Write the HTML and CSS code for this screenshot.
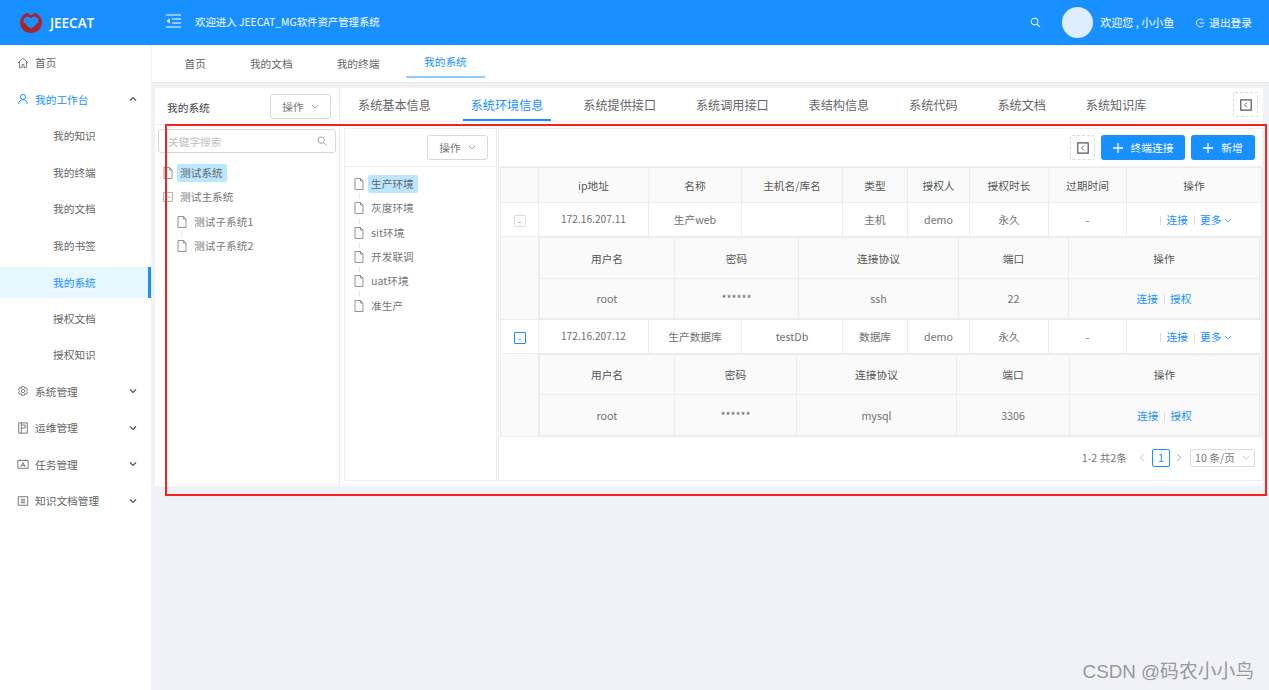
FILE: index.html
```html
<!DOCTYPE html>
<html lang="zh">
<head>
<meta charset="utf-8">
<title>JEECAT</title>
<link rel="stylesheet" href="styles.css">
</head>
<body>
<header class="topbar">
  <div class="brand">
    <svg class="logo" viewBox="0 0 24 22"><path d="M8 .8A11 10.500 0 1 0 16 .8L12 3.500Z" fill="#a6252f"/><path d="M12 6.500C9.500 3.500 4.500 4.800 4.500 9C4.500 12 8 15 12 18C16 15 19.500 12 19.500 9C19.500 4.800 14.500 3.500 12 6.500Z" fill="#1890ff"/><path d="M12 9.500C10 7 7 8 7 10C7 11.500 9 13.500 12 16C15 13.500 17 11.500 17 10C17 8 14 7 12 9.500Z" fill="#a6252f" opacity="0"/><path d="M5.500 10.500C7 13 9.500 15 12 16.500C14.500 15 17 13 18.500 10.500L20 12.500C17.500 15.500 14.500 18 12 19.500C9.500 18 6.500 15.500 4 12.500Z" fill="#a6252f"/></svg>
    <span class="brand-name">JEECAT</span>
  </div>
  <svg class="collapse" viewBox="0 0 16 14"><path d="M1 1h15M7 5h9M7 9h9M1 13h15" stroke="#fff" stroke-width="1.200" fill="none"/><path d="M5 4.500 L1.500 7 L5 9.500Z" fill="#fff"/></svg>
  <span class="welcome">欢迎进入 JEECAT_MG软件资产管理系统</span>
  <div class="top-right">
    <svg class="top-search" viewBox="0 0 12 12"><circle cx="5" cy="5" r="3.600" fill="none" stroke="#fff" stroke-width="1.100"/><path d="M8 8l3 3" stroke="#fff" stroke-width="1.100"/></svg>
    <span class="avatar"></span>
    <span class="hello">欢迎您 , 小小鱼</span>
    <svg class="logout" viewBox="0 0 12 12"><path d="M10 2.800A4.800 4.800 0 1 0 10 9.200" fill="none" stroke="#fff" stroke-width="1"/><path d="M5.500 6H11" stroke="#fff" stroke-width="1"/></svg>
    <span class="logout-text">退出登录</span>
  </div>
</header>

<div class="body">
  <nav class="sidebar">
    <a class="menu"><svg class="mi" viewBox="0 0 14 14"><path d="M1 7L7 1.500 13 7M3 5.500V12.500H5.800V9H8.200V12.500H11V5.500" fill="none" stroke="#666" stroke-width="1"/></svg><span>首页</span></a>
    <a class="menu open"><svg class="mi" viewBox="0 0 14 14"><circle cx="7" cy="4.500" r="3" fill="none" stroke="#1890ff" stroke-width="1.100"/><path d="M2 13c0-3.200 2.200-5.200 5-5.200s5 2 5 5.200" fill="none" stroke="#1890ff" stroke-width="1.100"/></svg><span>我的工作台</span><svg class="arrow" viewBox="0 0 8 8"><path d="M1 5.500L4 2.500 7 5.500" fill="none" stroke="#555" stroke-width="1.200"/></svg></a>
    <a class="sub">我的知识</a>
    <a class="sub">我的终端</a>
    <a class="sub">我的文档</a>
    <a class="sub">我的书签</a>
    <a class="sub active">我的系统</a>
    <a class="sub">授权文档</a>
    <a class="sub">授权知识</a>
    <a class="menu"><svg class="mi" viewBox="0 0 14 14"><path d="M5.500 1h3l.5 1.800 1.800-.6 1.500 2.600-1.400 1.200 1.400 1.200-1.500 2.600-1.800-.6-.5 1.800h-3l-.5-1.800-1.800.6-1.500-2.600L3.100 6 1.700 4.800l1.500-2.600 1.800.6Z" transform="translate(0 1)" fill="none" stroke="#666" stroke-width="1"/><circle cx="7" cy="7" r="2" fill="none" stroke="#666" stroke-width="1"/></svg><span>系统管理</span><svg class="arrow" viewBox="0 0 8 8"><path d="M1 2.500L4 5.500 7 2.500" fill="none" stroke="#555" stroke-width="1.200"/></svg></a>
    <a class="menu"><svg class="mi" viewBox="0 0 14 14"><path d="M2 1h10v12H2ZM5 1v12M5 3.500h4.500v3.500H5" fill="none" stroke="#666" stroke-width="1"/></svg><span>运维管理</span><svg class="arrow" viewBox="0 0 8 8"><path d="M1 2.500L4 5.500 7 2.500" fill="none" stroke="#555" stroke-width="1.200"/></svg></a>
    <a class="menu"><svg class="mi" viewBox="0 0 14 14"><path d="M1 3h12v9H1ZM4 3V1.500M10 3V1.500M4.500 10.500l2.500-5 2.500 5M5.500 8.500h3" fill="none" stroke="#666" stroke-width="1"/></svg><span>任务管理</span><svg class="arrow" viewBox="0 0 8 8"><path d="M1 2.500L4 5.500 7 2.500" fill="none" stroke="#555" stroke-width="1.200"/></svg></a>
    <a class="menu"><svg class="mi" viewBox="0 0 14 14"><path d="M1.500 2h11v10h-11ZM4.500 5h5M4.500 7h5M4.500 9h5" fill="none" stroke="#666" stroke-width="1"/></svg><span>知识文档管理</span><svg class="arrow" viewBox="0 0 8 8"><path d="M1 2.500L4 5.500 7 2.500" fill="none" stroke="#555" stroke-width="1.200"/></svg></a>
  </nav>

  <main class="main">
    <div class="pagetabs">
      <span class="ptab">首页</span>
      <span class="ptab">我的文档</span>
      <span class="ptab">我的终端</span>
      <span class="ptab on">我的系统</span>
    </div>

    <div class="workspace">
      <aside class="treepane">
        <div class="treehead">
          <span class="treetitle">我的系统</span>
          <button class="opbtn">操作<svg class="chev" viewBox="0 0 10 6"><path d="M1 1l4 4 4-4" fill="none" stroke="#888" stroke-width="1"/></svg></button>
        </div>
        <div class="search">
          <span>关键字搜索</span>
          <svg viewBox="0 0 12 12"><circle cx="5" cy="5" r="3.800" fill="none" stroke="#999" stroke-width="1.100"/><path d="M8 8l3 3" stroke="#999" stroke-width="1.100"/></svg>
        </div>
        <ul class="tree">
          <li class="tnode"><svg class="file" viewBox="0 0 10 12"><path d="M1 .5h5.500L9 3v8.500H1ZM6.500 .5V3H9" fill="none" stroke="#888" stroke-width=".9"/></svg><span class="tlabel sel">测试系统</span></li>
          <li class="tnode"><svg class="file" viewBox="0 0 10 12"><path d="M.5 1.500h9v9h-9ZM2.500 6h5" fill="none" stroke="#aaa" stroke-width=".9"/></svg><span class="tlabel">测试主系统</span></li>
          <li class="tnode child"><svg class="file" viewBox="0 0 10 12"><path d="M1 .5h5.500L9 3v8.500H1ZM6.500 .5V3H9" fill="none" stroke="#888" stroke-width=".9"/></svg><span class="tlabel">测试子系统1</span></li>
          <li class="tnode child linked"><svg class="file" viewBox="0 0 10 12"><path d="M1 .5h5.500L9 3v8.500H1ZM6.500 .5V3H9" fill="none" stroke="#888" stroke-width=".9"/></svg><span class="tlabel">测试子系统2</span></li>
        </ul>
      </aside>

      <section class="content">
        <div class="systabs">
          <span class="stab">系统基本信息</span>
          <span class="stab on">系统环境信息</span>
          <span class="stab">系统提供接口</span>
          <span class="stab">系统调用接口</span>
          <span class="stab">表结构信息</span>
          <span class="stab">系统代码</span>
          <span class="stab">系统文档</span>
          <span class="stab">系统知识库</span>
          <span class="foldbtn tabfold"><svg viewBox="0 0 12 12"><path d="M.8 .8h10.400v10.400H.8Z" fill="none" stroke="#555" stroke-width="1.200"/><path d="M7 3.500L4.500 6 7 8.500" fill="none" stroke="#555" stroke-width=".9"/></svg></span>
        </div>

        <div class="panes">
          <div class="envpane">
            <div class="envbar">
              <button class="opbtn">操作<svg class="chev" viewBox="0 0 10 6"><path d="M1 1l4 4 4-4" fill="none" stroke="#888" stroke-width="1"/></svg></button>
            </div>
            <ul class="envlist">
              <li class="tnode"><svg class="file" viewBox="0 0 10 12"><path d="M1 .5h5.500L9 3v8.500H1ZM6.500 .5V3H9" fill="none" stroke="#888" stroke-width=".9"/></svg><span class="tlabel sel">生产环境</span></li>
              <li class="tnode linked"><svg class="file" viewBox="0 0 10 12"><path d="M1 .5h5.500L9 3v8.500H1ZM6.500 .5V3H9" fill="none" stroke="#888" stroke-width=".9"/></svg><span class="tlabel">灰度环境</span></li>
              <li class="tnode linked"><svg class="file" viewBox="0 0 10 12"><path d="M1 .5h5.500L9 3v8.500H1ZM6.500 .5V3H9" fill="none" stroke="#888" stroke-width=".9"/></svg><span class="tlabel">sit环境</span></li>
              <li class="tnode linked"><svg class="file" viewBox="0 0 10 12"><path d="M1 .5h5.500L9 3v8.500H1ZM6.500 .5V3H9" fill="none" stroke="#888" stroke-width=".9"/></svg><span class="tlabel">开发联调</span></li>
              <li class="tnode linked"><svg class="file" viewBox="0 0 10 12"><path d="M1 .5h5.500L9 3v8.500H1ZM6.500 .5V3H9" fill="none" stroke="#888" stroke-width=".9"/></svg><span class="tlabel">uat环境</span></li>
              <li class="tnode linked"><svg class="file" viewBox="0 0 10 12"><path d="M1 .5h5.500L9 3v8.500H1ZM6.500 .5V3H9" fill="none" stroke="#888" stroke-width=".9"/></svg><span class="tlabel">准生产</span></li>
            </ul>
          </div>

          <div class="tablepane">
            <div class="tablebar">
              <span class="foldbtn"><svg viewBox="0 0 12 12"><path d="M.8 .8h10.400v10.400H.8Z" fill="none" stroke="#555" stroke-width="1.200"/><path d="M7 3.500L4.500 6 7 8.500" fill="none" stroke="#555" stroke-width=".9"/></svg></span>
              <button class="primary wide"><svg viewBox="0 0 10 10"><path d="M5 0v10M0 5h10" stroke="#fff" stroke-width="1.300"/></svg>终端连接</button>
              <button class="primary"><svg viewBox="0 0 10 10"><path d="M5 0v10M0 5h10" stroke="#fff" stroke-width="1.300"/></svg>新增</button>
            </div>

            <table class="grid outer">
              <colgroup><col class="c0"><col class="c1"><col class="c2"><col class="c3"><col class="c4"><col class="c5"><col class="c6"><col class="c7"><col class="c8"></colgroup>
              <thead>
                <tr><th></th><th>ip地址</th><th>名称</th><th>主机名/库名</th><th>类型</th><th>授权人</th><th>授权时长</th><th>过期时间</th><th>操作</th></tr>
              </thead>
              <tbody>
                <tr class="row">
                  <td><span class="expander">-</span></td><td class="num">172.16.207.11</td><td>生产web</td><td></td><td>主机</td><td>demo</td><td>永久</td><td>-</td>
                  <td class="acts"><span class="sep"></span><a>连接</a><span class="sep"></span><a>更多<svg class="morechev" viewBox="0 0 10 6"><path d="M1 1l4 4 4-4" fill="none" stroke="#1890ff" stroke-width="1"/></svg></a></td>
                </tr>
                <tr class="expanded">
                  <td class="gutter"></td>
                  <td colspan="8" class="nest">
                    <table class="grid inner first">
                      <colgroup><col class="n1"><col class="n2"><col class="n3"><col class="n4"><col class="n5"></colgroup>
                      <thead><tr><th>用户名</th><th>密码</th><th>连接协议</th><th>端口</th><th>操作</th></tr></thead>
                      <tbody><tr><td>root</td><td>******</td><td>ssh</td><td>22</td><td class="acts2"><a>连接</a><span class="sep"></span><a>授权</a></td></tr></tbody>
                    </table>
                  </td>
                </tr>
                <tr class="row">
                  <td><span class="expander hot">-</span></td><td class="num">172.16.207.12</td><td>生产数据库</td><td>testDb</td><td>数据库</td><td>demo</td><td>永久</td><td>-</td>
                  <td class="acts"><span class="sep"></span><a>连接</a><span class="sep"></span><a>更多<svg class="morechev" viewBox="0 0 10 6"><path d="M1 1l4 4 4-4" fill="none" stroke="#1890ff" stroke-width="1"/></svg></a></td>
                </tr>
                <tr class="expanded">
                  <td class="gutter"></td>
                  <td colspan="8" class="nest">
                    <table class="grid inner second">
                      <colgroup><col class="n1"><col class="n2"><col class="n3"><col class="n4"><col class="n5"></colgroup>
                      <thead><tr><th>用户名</th><th>密码</th><th>连接协议</th><th>端口</th><th>操作</th></tr></thead>
                      <tbody><tr><td>root</td><td>******</td><td>mysql</td><td>3306</td><td class="acts2"><a>连接</a><span class="sep"></span><a>授权</a></td></tr></tbody>
                    </table>
                  </td>
                </tr>
              </tbody>
            </table>

            <div class="pager">
              <span class="total">1-2 共2条</span>
              <svg class="pg" viewBox="0 0 6 10"><path d="M5 1L1 5l4 4" fill="none" stroke="#bbb" stroke-width="1"/></svg>
              <span class="pnum">1</span>
              <svg class="pg" viewBox="0 0 6 10"><path d="M1 1l4 4-4 4" fill="none" stroke="#999" stroke-width="1"/></svg>
              <span class="psize">10 条/页<svg class="chev" viewBox="0 0 10 6"><path d="M1 1l4 4 4-4" fill="none" stroke="#bbb" stroke-width="1"/></svg></span>
            </div>
          </div>
        </div>
      </section>
    </div>
  </main>
</div>

<div class="annotation"></div>
<div class="watermark">CSDN @码农小小鸟</div>
</body>
</html>
```
FILE: styles.css
```css
* { box-sizing: border-box; }
html, body { margin: 0; height: 100%; }
body {
  width: 1269px; height: 690px; overflow: hidden; position: relative;
  background: #f0f2f5; color: #666;
  font: 10.7px/1.4 "Noto Sans CJK SC", "Noto Sans", sans-serif;
}
ul { list-style: none; margin: 0; padding: 0; }
button { font: inherit; cursor: pointer; }
a { color: inherit; text-decoration: none; }

.topbar { height: 45px; background: #1890ff; color: #fff; display: flex; align-items: center; }
.brand { width: 165px; display: flex; align-items: center; padding-left: 19px; flex: none; }
.logo { width: 24px; height: 22px; }
.brand-name { margin-left: 7px; font: 600 13.5px "Open Sans", sans-serif; }
.collapse { width: 16px; height: 14px; margin-top: -4px; }
.welcome { margin-left: 14px; margin-top: -1px; font-size: 10.4px; }
.top-right { margin-left: auto; display: flex; align-items: center; padding-right: 17px; }
.top-search { width: 11px; height: 11px; }
.avatar { width: 31px; height: 31px; border-radius: 50%; background: #dceeff; margin-left: 21px; }
.hello { margin-left: 7px; font-size: 11px; }
.logout { width: 10px; height: 10px; margin-left: 21px; }
.logout-text { margin-left: 4px; }

.body { display: flex; height: 645px; }
.sidebar { width: 151px; flex: none; background: #fff; }
.menu { height: 36.5px; display: flex; align-items: center; padding-left: 17px; color: #666; }
.menu:first-child { margin-top: -.6px; }
.menu.open { color: #1890ff; }
.mi { width: 12px; height: 12px; margin-right: 6px; flex: none; }
.arrow { width: 8px; height: 8px; margin-left: auto; margin-right: 14px; }
.sub { height: 36.5px; display: flex; align-items: center; padding-left: 53px; }
.sub.active { background: #e6f7ff; color: #1890ff; border-right: 3px solid #1890ff; height: 30.5px; margin: 3.6px 0 2.4px; }

.main { flex: 1; min-width: 0; padding-left: 1px; }
.pagetabs { height: 38px; background: #fff; display: flex; padding-left: 10.5px; border-bottom: 1px solid #e8e8e8; }
.ptab { padding: 0 22px; display: flex; align-items: center; justify-content: center; }
.ptab.on { color: #1890ff; border-bottom: 2px solid #91caff; width: 79px; padding: 2px 0 0; margin-left: 4.5px; height: 33px; }

.workspace { margin: 5px 6px 0 3px; height: 398px; background: #fff; display: flex; }
.treepane { width: 185px; flex: none; border-right: 1px solid #eceef1; }
.treehead { height: 37px; display: flex; align-items: center; justify-content: space-between; padding: 1px 8px 0 12px; border-bottom: 1px solid #f2f2f2; }
.treetitle { color: #444; margin-top: 1px; }
.opbtn { height: 25px; width: 61px; background: #fff; color: #777; border: 1px solid #d9d9d9; border-radius: 3px; display: flex; align-items: center; justify-content: center; gap: 7px; padding: 0; }
.chev { width: 8px; height: 5px; }
.search { margin: 4px 3px 0 3px; height: 24px; border: 1px solid #d9d9d9; border-radius: 3px; display: flex; align-items: center; justify-content: space-between; padding: 0 8px 0 9px; color: #bfbfbf; }
.search svg { width: 10px; height: 10px; }

.tree { padding: 8px 0 0 8px; }
.envlist { padding: 5px 0 0 9px; }
.tnode { height: 24.3px; display: flex; align-items: center; position: relative; }
.tnode.child { padding-left: 14px; }
.tnode.linked::before { content: ""; position: absolute; left: 5px; top: -3px; width: 1px; height: 6px; background: #e8e8e8; }
.tnode.child.linked::before { left: 18px; }
.file { width: 10px; height: 12px; flex: none; margin-right: 4px; }
.tlabel { padding: 0 4px 0 3px; line-height: 18px; color: #777; }
.tlabel.sel { background: #bae7ff; color: #666; border-radius: 2px; }

.content { flex: 1; min-width: 0; display: flex; flex-direction: column; }
.systabs { height: 34px; flex: none; display: flex; align-items: flex-end; padding-left: 10px; border-bottom: 1px solid #eee; }
.stab { font-size: 12.15px; padding: 0 8px; height: 33px; line-height: 34px; margin-right: 23.8px; color: #666; white-space: nowrap; }
.stab.on { color: #1890ff; border-bottom: 2px solid #1890ff; }
.foldbtn { width: 25px; height: 25px; border: 1px dashed #d9d9d9; border-radius: 2px; display: flex; align-items: center; justify-content: center; background: #fff; }
.foldbtn svg { width: 12px; height: 12px; }
.tabfold { margin-left: auto; margin-right: 5px; align-self: center; }

.panes { flex: 1; display: flex; padding: 6px 0 5px 4px; gap: 1px; min-height: 0; }
.envpane { width: 153px; flex: none; border: 1px solid #eceef1; }
.envbar { height: 38px; display: flex; align-items: center; justify-content: flex-end; padding-right: 8px; border-bottom: 1px solid #eee; }
.tablepane { flex: 1; min-width: 0; border: 1px solid #eceef1; padding: 0 1px; }
.tablebar { height: 38px; display: flex; align-items: center; justify-content: flex-end; gap: 6px; padding-right: 7px; border-bottom: 1px solid #eee; margin: 0 -1px; }
.primary { height: 25px; width: 64px; border: 0; background: #1890ff; color: #fff; border-radius: 3px; display: flex; align-items: center; justify-content: center; gap: 8px; padding: 0; }
.primary.wide { width: 84px; }
.primary svg { width: 10px; height: 10px; }

.grid { border-collapse: collapse; table-layout: fixed; color: #717171; }
.grid th, .grid td { border: 1px solid #ececec; text-align: center; font-weight: 400; padding: 0; }
.outer { width: 761px; }
.c0 { width: 38px; } .c1 { width: 110px; } .c2 { width: 93px; } .c3 { width: 101px; }
.c4 { width: 65px; } .c5 { width: 62px; } .c6 { width: 79px; } .c7 { width: 78px; } .c8 { width: 135px; }
.outer > thead th { height: 35px; background: #fafafa; color: #555; }
.row td { height: 34px; background: #fff; }
.grid .num { font-size: 10.2px; }
.expanded > td { background: #fafafa; }
.inner { width: 720px; }
.inner th { height: 41px; background: #fafafa; color: #555; }
.inner td { height: 40px; background: #fafafa; }
.second th { height: 40px; }
.second td { height: 41px; }
.first .n1 { width: 135px; } .first .n2 { width: 124px; } .first .n3 { width: 160px; } .first .n4 { width: 110px; } .first .n5 { width: 191px; }
.second .n1 { width: 135px; } .second .n2 { width: 122px; } .second .n3 { width: 160px; } .second .n4 { width: 113px; } .second .n5 { width: 190px; }
.expander { width: 12px; height: 12px; display: inline-flex; align-items: center; justify-content: center; border: 1px solid #ddd; border-radius: 1px; font-size: 9px; line-height: 1; color: #777; vertical-align: middle; }
.expander.hot { border-color: #1890ff; color: #1890ff; }
.acts a, .acts2 a { color: #1890ff; }
.grid .acts { padding-right: 1px; }
.sep { display: inline-block; width: 1px; height: 9px; background: #ddd; margin: 0 5.5px; vertical-align: -1px; }
.morechev { width: 8px; height: 5px; margin-left: 3px; vertical-align: 1px; }

.pager { display: flex; align-items: center; justify-content: flex-end; height: 41px; padding-right: 6px; color: #777; }
.total { margin-right: 12px; }
.pg { width: 6px; height: 9px; }
.pnum { width: 18px; height: 18px; border: 1px solid #1890ff; border-radius: 2px; color: #1890ff; display: flex; align-items: center; justify-content: center; margin: 0 6px 0 7px; }
.psize { width: 65px; height: 18px; border: 1px solid #d9d9d9; border-radius: 2px; display: flex; align-items: center; justify-content: space-between; padding: 0 4px; margin-left: 8px; }

.annotation { position: absolute; left: 165px; top: 124px; width: 1102px; height: 372px; border: 2px solid #f5221f; pointer-events: none; }
.watermark { position: absolute; right: 15px; bottom: 7px; font: 18.8px "Liberation Sans", "Noto Sans CJK SC", sans-serif; color: #999; }
```
